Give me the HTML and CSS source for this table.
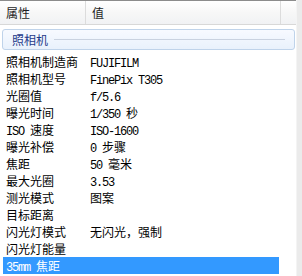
FILE: index.html
```html
<!DOCTYPE html>
<html>
<head>
    <title>属性</title>
    <link rel="stylesheet" href="styles.css">
</head>
<body>
    <div class="panel">
        <div class="list">
            <!-- column headers -->
            <div class="list-header">
                <div class="col-head col-name">属性</div>
                <div class="col-head col-value">值</div>
                <div class="col-head col-rest"></div>
            </div>

            <!-- property group -->
            <div class="group">
                <span class="group-title">照相机</span>
                <span class="group-line"></span>
            </div>

            <div class="rows">
                <div class="row"><span class="name">照相机制造商</span><span class="value"><span class="mono">FUJIFILM</span></span></div>
                <div class="row"><span class="name">照相机型号</span><span class="value"><span class="mono">FinePix T305</span></span></div>
                <div class="row"><span class="name">光圈值</span><span class="value"><span class="mono">f/5.6</span></span></div>
                <div class="row"><span class="name">曝光时间</span><span class="value"><span class="mono">1/350 </span>秒</span></div>
                <div class="row"><span class="name"><span class="mono">ISO </span>速度</span><span class="value"><span class="mono">ISO-1600</span></span></div>
                <div class="row"><span class="name">曝光补偿</span><span class="value"><span class="mono">0 </span>步骤</span></div>
                <div class="row"><span class="name">焦距</span><span class="value"><span class="mono">50 </span>毫米</span></div>
                <div class="row"><span class="name">最大光圈</span><span class="value"><span class="mono">3.53</span></span></div>
                <div class="row"><span class="name">测光模式</span><span class="value">图案</span></div>
                <div class="row"><span class="name">目标距离</span><span class="value"></span></div>
                <div class="row"><span class="name">闪光灯模式</span><span class="value">无闪光，强制</span></div>
                <div class="row"><span class="name">闪光灯能量</span><span class="value"></span></div>
                <div class="row selected"><span class="name"><span class="mono">35mm </span>焦距</span><span class="value"></span></div>
            </div>
        </div>
        <div class="edge"></div>
    </div>
</body>
</html>
```

FILE: styles.css
```css
/* Details list */
body {
    margin: 0;
    background-color: #fff;
    font-family: "Noto Sans CJK SC", "Liberation Sans", sans-serif;
    font-size: 12px;
    color: #000;
}
.panel {
    display: flex;
    width: 302px;
    height: 276px;
    overflow: hidden;
}
.list {
    width: 297px;
    display: flex;
    flex-direction: column;
}
.edge {
    width: 5px;
    background-color: #ebebeb;
    border-left: 1px solid #f4f4f4;
}

/* header row */
.list-header {
    display: flex;
    height: 23px;
    border-top: 1px solid #8c8c8c;
    border-bottom: 1px solid #d8d8d8;
    background: linear-gradient(#ffffff, #f7f7f7 50%, #f1f2f4);
}
.col-head {
    line-height: 23px;
    color: #1e1e1e;
    border-right: 1px solid #dcdcdc;
    box-sizing: border-box;
}
.col-name {
    width: 86px;
    padding-left: 6px;
}
.col-value {
    width: 195px;
    padding-left: 6px;
}
.col-rest {
    flex: 1;
    border-right: none;
}

/* group caption */
.group {
    display: flex;
    align-items: center;
    height: 19px;
    margin: 4px 1px 0 2px;
    padding: 0 9px;
    border: 1px solid #bfd3ea;
    border-radius: 3px;
    background: linear-gradient(#f7faff, #e9f1fc);
}
.group-title {
    color: #1e3a8a;
    margin-right: 6px;
}
.group-line {
    flex: 1;
    height: 1px;
    background-color: #c9d2e0;
}

/* property rows */
.rows {
    margin-top: 3px;
}
.row {
    display: flex;
    height: 17px;
    line-height: 17px;
    margin: 0 17px 0 3px;
    white-space: nowrap;
}
.name {
    width: 87px;
    padding-left: 3px;
    box-sizing: border-box;
}
.value {
    flex: 1;
}
.mono {
    font-family: "Liberation Mono", monospace;
    letter-spacing: -1.2px;
}
.row.selected {
    background-color: #3399ff;
    color: #fff;
}
```
